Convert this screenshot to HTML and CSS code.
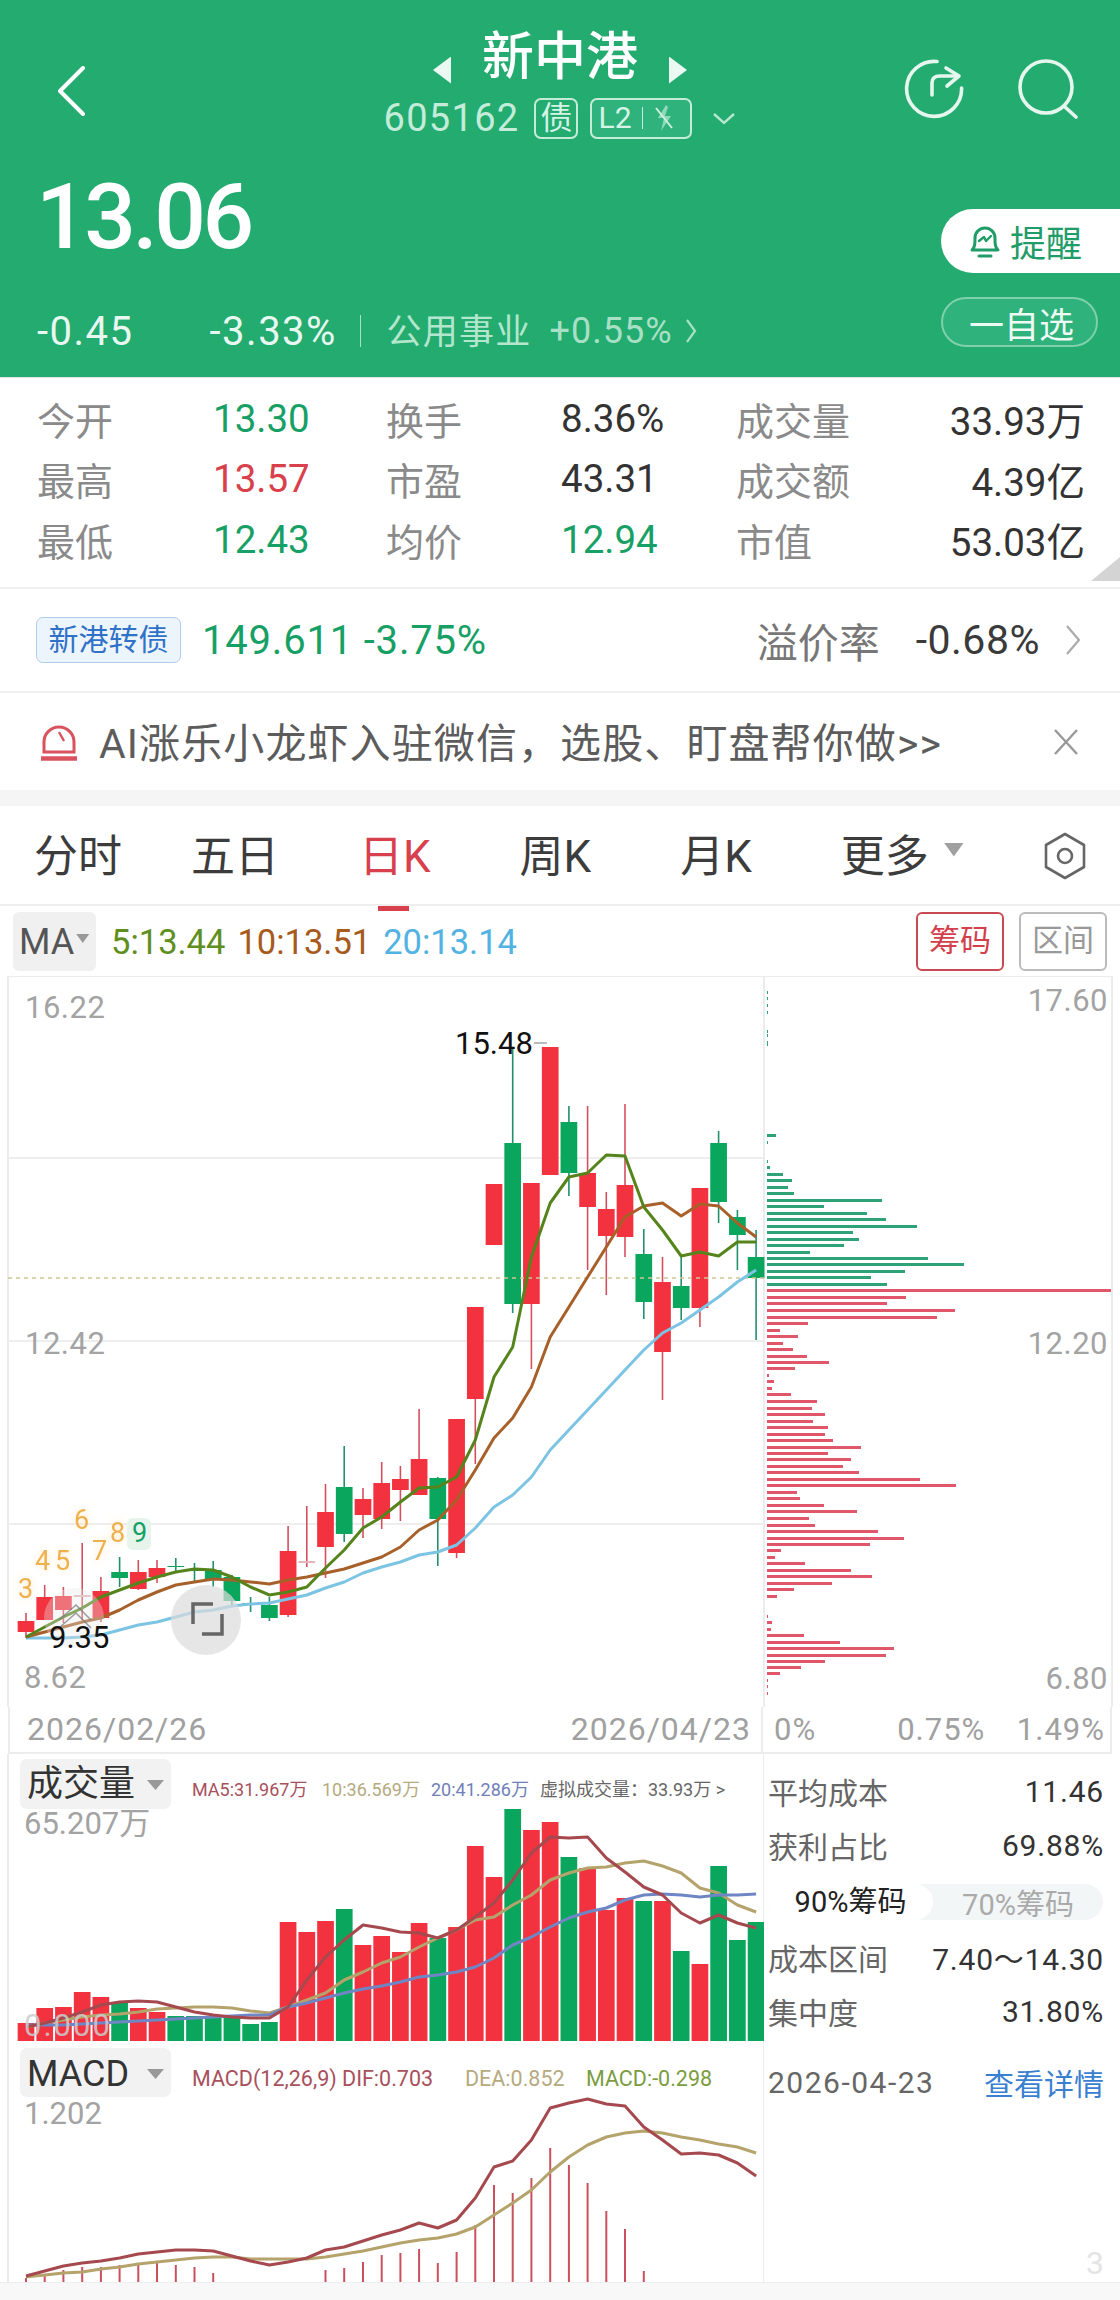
FILE: index.html
```html
<!DOCTYPE html>
<html lang="zh-CN">
<head>
    <meta charset="UTF-8">
    <meta name="viewport" content="width=device-width, initial-scale=1.0">
    <title>新中港 605162</title>
    <link rel="stylesheet" href="styles.css">
</head>
<body>
<div class="page">
    <header class="header">
        <div class="nav">
            <svg class="nav-back" width="28" height="50" viewBox="0 0 28 50"><path d="M26 2 3 25l23 23" fill="none" stroke="#fff" stroke-width="4" stroke-linecap="round" stroke-linejoin="round"/></svg>
            <div class="nav-center">
                <div class="nav-title">
                    <span class="tri-left"></span>
                    <span>新中港</span>
                    <span class="tri-right"></span>
                </div>
                <div class="nav-code">
                    <span class="code">605162</span>
                    <span class="code-badge">债</span>
                    <span class="code-badge level">
                        <span>L2</span>
                        <i class="level-sep"></i>
                        <svg width="22" height="30" viewBox="0 0 22 30"><path d="M13 2 5 15h6l-3 13 10-15h-6l3-9" fill="#8fd8b8"/><path d="M3 5l16 20" stroke="#cfeee0" stroke-width="2"/></svg>
                    </span>
                    <svg class="code-more" width="24" height="13" viewBox="0 0 24 13"><path d="M2 2l10 9 10-9" fill="none" stroke="#b8e6d0" stroke-width="2.4"/></svg>
                </div>
            </div>
            <div class="nav-icons">
                <svg width="60" height="60" viewBox="0 0 60 60" fill="none" stroke="#e4f6ee" stroke-width="3.6" stroke-linecap="round" stroke-linejoin="round">
                    <path d="M33 2.5A27.5 27.5 0 1 0 57.6 29"/>
                    <path d="M28 36V24q0-7 8-7h17"/>
                    <path d="M42 9l13 8-12 10"/>
                </svg>
                <svg width="60" height="60" viewBox="0 0 60 60" fill="none" stroke="#e4f6ee" stroke-width="3.6" stroke-linecap="round">
                    <circle cx="28" cy="28" r="26"/>
                    <path d="M47 48l11 10"/>
                </svg>
            </div>
        </div>
        <div class="quote">
            <div class="quote-left">
                <div class="price">13.06</div>
                <div class="change">
                    <span class="change-abs">-0.45</span>
                    <span class="change-pct">-3.33%</span>
                    <i class="change-sep"></i>
                    <span class="sector">公用事业</span>
                    <span class="sector-pct">+0.55%</span>
                    <svg width="12" height="26" viewBox="0 0 12 26"><path d="M2 2l8 11-8 11" fill="none" stroke="#a8e0c6" stroke-width="2.2"/></svg>
                </div>
            </div>
            <div class="quote-right">
                <div class="remind">
                    <svg width="34" height="36" viewBox="0 0 34 36" fill="none" stroke="#1f9c68" stroke-width="3" stroke-linejoin="round" stroke-linecap="round">
                        <path d="M4 27c3-3 3-6 3-12a10 10 0 0 1 20 0c0 6 0 9 3 12z"/>
                        <path d="M11 33h12"/>
                        <path d="M11 18l5-4 2 4 5-5" stroke-width="2.4"/>
                    </svg>
                    <span>提醒</span>
                </div>
                <div class="watch"><span class="watch-dash">一</span>自选</div>
            </div>
        </div>
    </header>

    <section class="stats">
        <span class="stat-label">今开</span><span class="num down">13.30</span>
        <span class="stat-label">换手</span><span class="num">8.36%</span>
        <span class="stat-label">成交量</span><span class="num end">33.93万</span>
        <span class="stat-label">最高</span><span class="num up">13.57</span>
        <span class="stat-label">市盈</span><span class="num">43.31</span>
        <span class="stat-label">成交额</span><span class="num end">4.39亿</span>
        <span class="stat-label">最低</span><span class="num down">12.43</span>
        <span class="stat-label">均价</span><span class="num down">12.94</span>
        <span class="stat-label">市值</span><span class="num end">53.03亿</span>
        <i class="stats-corner"></i>
    </section>

    <section class="bond">
        <span class="bond-tag">新港转债</span>
        <span class="bond-price">149.611 -3.75%</span>
        <span class="bond-label">溢价率</span>
        <span class="bond-rate">-0.68%</span>
        <svg width="17" height="34" viewBox="0 0 17 34"><path d="M2 3l12 14L2 31" fill="none" stroke="#aaa" stroke-width="2.2"/></svg>
    </section>

    <section class="banner">
        <svg width="38" height="40" viewBox="0 0 38 40" fill="none" stroke="#d9535f" stroke-width="3">
            <path d="M4 30V20a15 15 0 0 1 30 0v10z"/>
            <path d="M19 10l5 9" stroke-width="2.4"/>
            <path d="M1 36.500h36" stroke-width="4.500"/>
        </svg>
        <span class="banner-text">AI涨乐小龙虾入驻微信，选股、盯盘帮你做&gt;&gt;</span>
        <svg width="28" height="28" viewBox="0 0 28 28"><path d="M3 2l22 24M25 2 3 26" stroke="#999" stroke-width="2.4"/></svg>
    </section>

    <nav class="tabs">
        <span class="tab">分时</span>
        <span class="tab tab-tight">五日</span>
        <span class="tab active">日K</span>
        <span class="tab">周K</span>
        <span class="tab">月K</span>
        <span class="tab tab-more">更多<i class="tab-caret"></i></span>
        <svg class="tab-gear" width="44" height="48" viewBox="0 0 44 48" fill="none" stroke="#666" stroke-width="2.600">
            <path d="M22 2l19 11v22L22 46 3 35V13z" stroke-linejoin="round"/>
            <circle cx="22" cy="24" r="7"/>
        </svg>
    </nav>

    <section class="ma-bar">
        <span class="ma-chip">MA<i class="caret"></i></span>
        <span class="ma-val ma5">5:13.44</span>
        <span class="ma-val ma10">10:13.51</span>
        <span class="ma-val ma20">20:13.14</span>
        <span class="ma-btn on">筹码</span>
        <span class="ma-btn">区间</span>
    </section>

    <svg class="kline" width="1120" height="731" viewBox="0 976 1120 731">
        <path class="frame" d="M8 1707V976H1112V1707M764 976V1707"/>
        <path class="grid" d="M8 1158H764M8 1341H764M8 1524H764"/>
        <g id="kline-candles"></g>
        <path class="last-line" d="M8 1278H764"/>
        <g id="kline-lines"></g>
        <g id="chip-bars"></g>
        <text class="axis" x="25" y="1018">16.22</text>
        <text class="axis" x="25" y="1354">12.42</text>
        <text class="axis" x="24" y="1688">8.62</text>
        <text class="axis end" x="1108" y="1011">17.60</text>
        <text class="axis end" x="1108" y="1354">12.20</text>
        <text class="axis end" x="1108" y="1689">6.80</text>
        <text class="extreme" x="455" y="1054">15.48</text>
        <path class="extreme-dash" d="M534 1043h13"/>
        <circle class="fold-bg" cx="74" cy="1618" r="30"/>
        <path class="fold-mark" d="M59 1620l17-15 15 15M59 1628l17-15 15 15"/>
        <text class="extreme" x="49" y="1648">9.35</text>
        <text class="td" x="18" y="1598">3</text>
        <text class="td" x="35" y="1570">4</text>
        <text class="td" x="55" y="1570">5</text>
        <text class="td" x="74" y="1529">6</text>
        <text class="td" x="92" y="1560">7</text>
        <text class="td" x="110" y="1542">8</text>
        <rect class="td-chip" x="127" y="1518" width="24" height="32" rx="6"/>
        <text class="td nine" x="132" y="1542">9</text>
        <circle class="zoom-bg" cx="206" cy="1620" r="35"/>
        <path class="zoom-mark" d="M193 1624v-20h20M222 1614v20h-20"/>
    </svg>

    <div class="axis-row">
        <div class="dates">
            <span>2026/02/26</span>
            <span>2026/04/23</span>
        </div>
        <div class="scale">
            <span>0%</span>
            <span class="scale-mid">0.75%</span>
            <span class="scale-end">1.49%</span>
        </div>
    </div>

    <div class="lower">
        <svg class="sub-charts" width="764" height="528" viewBox="0 1754 764 528">
            <path class="frame" d="M8 1754V2282M764 1754V2282"/>
            <g id="volume-bars"></g>
            <g id="volume-lines"></g>
            <rect class="chip" x="20" y="1759" width="151" height="50" rx="7"/>
            <text class="chip-text" x="27" y="1796">成交量</text>
            <path class="chip-caret" d="M147 1780h17l-8.500 10z"/>
            <text class="legend-sm vr" x="192" y="1796">MA5:31.967万</text>
            <text class="legend-sm vt" x="322" y="1796">10:36.569万</text>
            <text class="legend-sm vb" x="431" y="1796">20:41.286万</text>
            <text class="legend-sm vg" x="540" y="1796">虚拟成交量：33.93万 &gt;</text>
            <text class="axis-sm" x="24" y="1834">65.207万</text>
            <text class="axis-zero" x="24" y="2036">0.000</text>
            <rect class="chip" x="20" y="2048" width="151" height="49" rx="7"/>
            <text class="chip-text" x="27" y="2086">MACD</text>
            <path class="chip-caret" d="M147 2069h17l-8.500 10z"/>
            <text class="legend-md vr" x="192" y="2086">MACD(12,26,9) DIF:0.703</text>
            <text class="legend-md vt" x="465" y="2086">DEA:0.852</text>
            <text class="legend-md vo" x="586" y="2086">MACD:-0.298</text>
            <text class="axis-sm" x="24" y="2124">1.202</text>
            <g id="macd-chart"></g>
        </svg>
        <aside class="chips-info">
            <div class="info-row"><span class="info-key">平均成本</span><span class="info-val">11.46</span></div>
            <div class="info-row"><span class="info-key">获利占比</span><span class="info-val">69.88%</span></div>
            <div class="chip-toggle">
                <span class="toggle-on">90%筹码</span>
                <span class="toggle-off">70%筹码</span>
            </div>
            <div class="info-row"><span class="info-key">成本区间</span><span class="info-val">7.40～14.30</span></div>
            <div class="info-row"><span class="info-key">集中度</span><span class="info-val">31.80%</span></div>
            <div class="info-row info-date"><span class="info-day">2026-04-23</span><span class="info-link">查看详情</span></div>
            <div class="watermark">3</div>
        </aside>
    </div>
    <div class="home-bar"></div>
</div>
<script src="chart.js"></script>
</body>
</html>
```

FILE: styles.css
```css
* {
    box-sizing: border-box;
}
body {
    margin: 0;
    font-family: Roboto, 'Noto Sans CJK SC', sans-serif;
    background: #fff;
}
i {
    display: block;
}
.page {
    width: 1120px;
    height: 2300px;
    overflow: hidden;
    display: flex;
    flex-direction: column;
}

/* green header */
.header {
    height: 377px;
    background: #23ab70;
    color: #fff;
    flex: none;
}
.nav {
    height: 150px;
    display: grid;
    grid-template-columns: 1fr auto 1fr;
}
.nav-back {
    margin: 66px 0 0 57px;
}
.nav-center {
    padding-top: 30px;
}
.nav-title {
    height: 56px;
    display: flex;
    justify-content: center;
    align-items: center;
    gap: 31px;
    font-size: 52px;
    font-weight: 500;
    line-height: 56px;
}
.tri-left, .tri-right {
    width: 18px;
    height: 27px;
    margin-top: 24px;
    background: #eafaf2;
}
.tri-left {
    clip-path: polygon(100% 0, 100% 100%, 0 50%);
}
.tri-right {
    clip-path: polygon(0 0, 100% 50%, 0 100%);
}
.nav-code {
    height: 42px;
    margin-top: 11px;
    display: flex;
    align-items: center;
    gap: 12px;
}
.code {
    font-size: 38px;
    letter-spacing: 1.300px;
    color: #c4ecd9;
    margin-right: 3px;
}
.code-badge {
    height: 41px;
    min-width: 44px;
    border: 2px solid #c4ecd9;
    border-radius: 7px;
    font-size: 32px;
    line-height: 36px;
    text-align: center;
    color: #d6f3e6;
}
.code-badge.level {
    width: 102px;
    padding-left: 6px;
    display: flex;
    align-items: center;
    gap: 10px;
    font-size: 30px;
    background: #2fb27b;
}
.level-sep {
    width: 1.500px;
    height: 22px;
    background: #c4ecd9;
}
.code-more {
    margin-left: 8px;
}
.nav-icons {
    display: flex;
    justify-content: flex-end;
    gap: 54px;
    padding: 59px 42px 0 0;
}
.quote {
    display: flex;
    justify-content: space-between;
}
.quote-left {
    padding: 22px 0 0 36px;
}
.price {
    font-size: 91px;
    line-height: 90px;
    font-weight: 500;
    letter-spacing: -3.500px;
}
.change {
    height: 40px;
    margin: 49px 0 0 1px;
    display: flex;
    align-items: center;
    font-size: 40px;
    letter-spacing: 1.500px;
    color: #e8f8f0;
}
.change-pct {
    margin-left: 76px;
}
.change-sep {
    width: 1.500px;
    height: 32px;
    margin: 0 25px 0 23px;
    background: #a8e0c6;
}
.sector {
    margin-bottom: 6px;
    font-size: 35px;
    letter-spacing: 1.300px;
    color: #b2e6cd;
}
.sector-pct {
    margin: 0 12px 0 18px;
    font-size: 36px;
    letter-spacing: 1px;
    color: #a8e0c6;
}
.quote-right {
    padding-top: 59px;
    display: flex;
    flex-direction: column;
    align-items: flex-end;
}
.remind {
    width: 179px;
    height: 64px;
    padding-left: 27px;
    display: flex;
    align-items: center;
    gap: 8px;
    background: #fff;
    border-radius: 32px 0 0 32px;
    color: #1f9c68;
    font-size: 36px;
}
.watch {
    width: 157px;
    height: 50px;
    margin: 24px 22px 0 0;
    padding-left: 26px;
    display: flex;
    align-items: center;
    border: 2px solid #7fd0ab;
    border-radius: 25px;
    background: #2fb27b;
    font-size: 35px;
    color: #eefaf4;
}
.watch-dash {
    margin-right: 0;
}

/* open / high / low table */
.stats {
    position: relative;
    height: 212px;
    padding: 10px 0 0 37px;
    border-top: 1px solid #e4e4e4;
    border-bottom: 2px solid #f0f0f0;
    display: grid;
    grid-template-columns: 176px 173px 175px 175px 175px 174px;
    grid-auto-rows: 60.500px;
    align-items: center;
    flex: none;
}
.stat-label {
    font-size: 38px;
    color: #8a8a8a;
}
.num {
    font-size: 38.500px;
    color: #333;
}
.num.end {
    text-align: right;
}
.up {
    color: #d8404c;
}
.down {
    color: #17a065;
}
.stats-corner {
    position: absolute;
    right: 0;
    bottom: 6px;
    width: 29px;
    height: 24px;
    background: #d4d4d4;
    clip-path: polygon(100% 0, 100% 100%, 0 100%);
}

/* convertible bond row */
.bond {
    height: 104px;
    padding: 0 38px 0 36px;
    display: flex;
    align-items: center;
    border-bottom: 2px solid #f0f0f0;
    flex: none;
}
.bond-tag {
    width: 145px;
    height: 46px;
    border: 1.500px solid #b0cdea;
    border-radius: 7px;
    background: #edf5fc;
    color: #2f72c8;
    font-size: 30px;
    line-height: 43px;
    text-align: center;
}
.bond-price {
    margin-left: 21px;
    font-size: 40px;
    letter-spacing: .8px;
    color: #17a065;
}
.bond-label {
    margin-left: auto;
    font-size: 41px;
    color: #777;
}
.bond-rate {
    margin: 0 25px 0 36px;
    font-size: 41px;
    letter-spacing: .5px;
    color: #3a3a3a;
}

/* news banner */
.banner {
    height: 97px;
    padding: 0 40px;
    display: flex;
    align-items: center;
    flex: none;
}
.banner-text {
    margin: 0 0 4px 21px;
    flex: 1;
    font-size: 41px;
    letter-spacing: 1.100px;
    color: #5c5c5c;
    white-space: nowrap;
}

/* period tabs */
.tabs {
    position: relative;
    height: 116px;
    padding: 11px 0 0 34px;
    border-top: 16px solid #f5f5f5;
    border-bottom: 2px solid #eee;
    display: flex;
    align-items: center;
    gap: 89px;
    flex: none;
    font-size: 44px;
    color: #3c3c3c;
}
.tab {
    position: relative;
    padding-bottom: 16px;
}
.tab-tight {
    margin-left: -20px;
}
.tab.active {
    margin-left: -9px;
    color: #d9404e;
}
.tab.active::after {
    content: "";
    position: absolute;
    left: 19px;
    bottom: -10px;
    width: 31px;
    height: 5px;
    background: #d9404e;
}
.tab-caret {
    position: absolute;
    left: 103px;
    top: 22px;
    width: 20px;
    height: 14px;
    background: #a0a0a0;
    clip-path: polygon(0 0, 100% 0, 50% 100%);
}
.tab-gear {
    position: absolute;
    left: 1043px;
    top: 26px;
}

/* moving average row */
.ma-bar {
    height: 70px;
    padding: 6px 13px 5px;
    display: flex;
    align-items: center;
    gap: 12px;
    flex: none;
}
.ma-chip {
    width: 83px;
    height: 59px;
    margin-right: 3px;
    padding-left: 6px;
    display: flex;
    align-items: center;
    border-radius: 6px;
    background: #f0f0f0;
    font-size: 36px;
    color: #555;
}
.caret {
    width: 13px;
    height: 9px;
    margin: 0 0 6px 2px;
    background: #999;
    clip-path: polygon(0 0, 100% 0, 50% 100%);
}
.ma-val {
    font-size: 34.500px;
}
.ma5 {
    color: #5f8f1f;
}
.ma10 {
    color: #a65a1c;
}
.ma20 {
    color: #52b2e2;
}
.ma-btn {
    width: 88px;
    height: 59px;
    border: 2px solid #bbb;
    border-radius: 6px;
    color: #999;
    font-size: 31px;
    line-height: 54px;
    text-align: center;
}
.ma-btn.on {
    margin-left: auto;
    margin-right: 3px;
    border-color: #c94a55;
    color: #d33f4c;
}

/* charts, all coordinates are page pixels through the viewBox */
.kline, .sub-charts {
    display: block;
    flex: none;
}
.frame {
    fill: none;
    stroke: #ececec;
    stroke-width: 2;
}
.grid {
    stroke: #eee;
    stroke-width: 2;
}
.last-line {
    stroke: #cfc596;
    stroke-width: 1.500;
    stroke-dasharray: 4 4;
}
.wick-up {
    stroke: #d4505f;
    stroke-width: 1.600;
    fill: none;
}
.wick-down {
    stroke: #22906a;
    stroke-width: 1.600;
    fill: none;
}
.body-up {
    fill: #f2333f;
}
.body-down {
    fill: #0aa65e;
}
.doji {
    stroke: #e3b4b8;
    stroke-width: 2;
    fill: none;
}
.line {
    fill: none;
    stroke-width: 3;
    stroke-linejoin: round;
}
.l-ma5 {
    stroke: #56841c;
}
.l-ma10 {
    stroke: #a8602a;
}
.l-ma20 {
    stroke: #7cc4e4;
}
.l-vr {
    stroke: #a6494f;
    stroke-width: 3;
}
.l-vt {
    stroke: #b5a36c;
    stroke-width: 3;
}
.l-vb {
    stroke: #6f86c4;
    stroke-width: 3;
}
.macd-bar {
    stroke: #c9505c;
    stroke-width: 2;
    fill: none;
}
.chip-green {
    fill: #2fa378;
}
.chip-red {
    fill: #e0566a;
}
.axis {
    font-size: 31px;
    fill: #a3a3a3;
    letter-spacing: .5px;
}
.axis.end {
    text-anchor: end;
}
.extreme {
    font-size: 31px;
    fill: #111;
}
.extreme-dash {
    stroke: #bbb;
    stroke-width: 2;
}
.td {
    font-size: 27px;
    fill: #efb04e;
    filter: drop-shadow(0 0 4px #fde6bd);
}
.td.nine {
    fill: #17a065;
    filter: none;
}
.td-chip {
    fill: #e6f4ec;
}
.fold-bg {
    fill: #e8e8e8;
    opacity: .35;
}
.fold-mark {
    fill: none;
    stroke: #777;
    stroke-width: 1.600;
    opacity: .7;
}
.zoom-bg {
    fill: #dcdcdc;
    opacity: .7;
}
.zoom-mark {
    fill: none;
    stroke: #666;
    stroke-width: 3.500;
}
.chip {
    fill: #f2f2f2;
}
.chip-text {
    font-size: 36px;
    fill: #333;
}
.chip-caret {
    fill: #999;
}
.legend-sm {
    font-size: 18px;
}
.legend-md {
    font-size: 21.500px;
}
.vr {
    fill: #a8505c;
}
.vt {
    fill: #b5aa80;
}
.vb {
    fill: #6f80b8;
}
.vg {
    fill: #666;
}
.vo {
    fill: #7b9c40;
}
.axis-sm {
    font-size: 31px;
    fill: #a3a3a3;
}
.axis-zero {
    font-size: 31px;
    fill: rgba(205, 205, 205, .85);
    letter-spacing: 2px;
}

/* row under the candles */
.axis-row {
    height: 47px;
    display: flex;
    flex: none;
    border-bottom: 2px solid #ececec;
    margin: 0 8px;
    color: #a0a0a0;
    font-size: 32px;
    line-height: 45px;
    letter-spacing: 1px;
}
.dates {
    width: 755px;
    padding: 0 10px 0 17px;
    display: flex;
    justify-content: space-between;
    border-left: 2px solid #ececec;
    border-right: 2px solid #ececec;
}
.scale {
    flex: 1;
    padding: 0 5px 0 11px;
    display: flex;
    border-right: 2px solid #ececec;
    font-size: 31px;
}
.scale-mid {
    margin-left: 81px;
}
.scale-end {
    margin-left: auto;
}

/* chip stats on the right */
.lower {
    height: 528px;
    display: flex;
    flex: none;
}
.chips-info {
    flex: 1;
    padding: 10px 16px 0 4px;
    display: flex;
    flex-direction: column;
    font-size: 30px;
}
.info-row {
    height: 54px;
    display: flex;
    justify-content: space-between;
    align-items: center;
}
.info-key {
    color: #666;
    letter-spacing: 0;
}
.info-val {
    color: #333;
    letter-spacing: .8px;
}
.chip-toggle {
    height: 36px;
    margin: 12px 1px 10px 0;
    display: flex;
    align-items: center;
    border-radius: 18px;
    background: #f3f6f7;
    font-size: 29px;
}
.toggle-on {
    width: 165px;
    height: 36px;
    border-radius: 18px;
    background: #fff;
    text-align: center;
    line-height: 36px;
    color: #222;
}
.toggle-off {
    flex: 1;
    text-align: center;
    color: #aaa;
}
.info-date {
    margin-top: 17px;
}
.info-day {
    color: #666;
    letter-spacing: 1.500px;
}
.info-link {
    color: #3a80d0;
}
.watermark {
    margin-top: auto;
    line-height: 38px;
    text-align: right;
    font-size: 32px;
    color: #e4e4e4;
}
.home-bar {
    flex: 1;
    background: #f8f8f8;
    border-top: 1px solid #eee;
}
```

FILE: chart.js
```js
const X = i => 26 + 18.72 * i;
const BODY = 16.7;

// kind, wick top, body top, body bottom, wick bottom
const candles = [
    ['u', 1613, 1621, 1632, 1638], ['u', 1585, 1597, 1620, 1620], ['u', 1587, 1596, 1610, 1623],
    ['p', 1543, 1595, 1597, 1620], ['u', 1577, 1591, 1618, 1622], ['d', 1557, 1572, 1578, 1587],
    ['u', 1560, 1572, 1589, 1590], ['u', 1560, 1568, 1577, 1583], ['d', 1558, 1566, 1567, 1573],
    ['d', 1563, 1570, 1571, 1583], ['d', 1561, 1570, 1580, 1587], ['d', 1575, 1577, 1601, 1607],
    ['d', 1597, 1603, 1604, 1612], ['d', 1597, 1605, 1618, 1621], ['u', 1526, 1551, 1615, 1617],
    ['p', 1506, 1561, 1562, 1567], ['u', 1484, 1512, 1547, 1578], ['d', 1446, 1487, 1534, 1542],
    ['u', 1488, 1499, 1515, 1538], ['u', 1462, 1483, 1519, 1529], ['u', 1466, 1479, 1490, 1521],
    ['u', 1409, 1459, 1495, 1495], ['d', 1477, 1478, 1519, 1566], ['u', 1419, 1419, 1553, 1558],
    ['u', 1307, 1307, 1399, 1464], ['u', 1184, 1184, 1245, 1245], ['d', 1048, 1143, 1304, 1313],
    ['u', 1183, 1183, 1304, 1369], ['u', 1047, 1047, 1175, 1175], ['d', 1106, 1122, 1173, 1196],
    ['u', 1106, 1173, 1207, 1270], ['u', 1192, 1209, 1236, 1295], ['u', 1104, 1185, 1237, 1257],
    ['d', 1229, 1254, 1302, 1319], ['u', 1257, 1282, 1352, 1400], ['d', 1257, 1286, 1308, 1320],
    ['u', 1188, 1188, 1308, 1327], ['d', 1131, 1143, 1202, 1223], ['d', 1210, 1217, 1235, 1270],
    ['d', 1230, 1257, 1278, 1340]
];

const ma5 = [1637, 1627, 1617, 1608, 1597, 1590, 1583, 1577, 1572, 1569, 1570, 1577, 1587, 1595, 1592, 1587, 1568, 1550, 1528, 1517,
    1502, 1488, 1487, 1477, 1440, 1377, 1347, 1257, 1203, 1177, 1173, 1155, 1156, 1207, 1230, 1256, 1252, 1256, 1242, 1242];
const ma10 = [1637, 1632, 1627, 1622, 1618, 1610, 1600, 1592, 1585, 1582, 1579, 1580, 1582, 1584, 1580, 1577, 1573, 1569, 1563, 1557,
    1547, 1530, 1520, 1500, 1470, 1438, 1418, 1387, 1337, 1307, 1277, 1247, 1217, 1206, 1203, 1216, 1204, 1206, 1223, 1237];
const ma20 = [1638, 1638, 1638, 1637, 1635, 1630, 1625, 1622, 1617, 1612, 1610, 1606, 1604, 1603, 1599, 1595, 1588, 1582, 1573, 1567,
    1562, 1555, 1552, 1545, 1528, 1507, 1495, 1477, 1450, 1430, 1410, 1390, 1370, 1350, 1333, 1323, 1310, 1297, 1282, 1270];

// chip bars: y and right end, from the top of the panel down
const chipGreen = [[991, 768], [997, 768], [1004, 768], [1011, 768], [1030, 768], [1034, 768], [1041, 768], [1043, 768],
    [1134, 776], [1141, 768], [1160, 768], [1166, 770], [1173, 783], [1179, 792], [1186, 788], [1192, 794],
    [1199, 882], [1205, 824], [1212, 867], [1218, 886], [1225, 917], [1231, 853], [1238, 859], [1244, 844],
    [1251, 810], [1257, 928], [1263, 964], [1270, 905], [1276, 871], [1283, 887]];
const chipRed = [[1289, 1111], [1296, 906], [1302, 887], [1309, 955], [1316, 937], [1322, 808], [1329, 780], [1335, 798],
    [1342, 783], [1348, 793], [1355, 807], [1361, 829], [1367, 795], [1374, 769], [1380, 774], [1387, 772],
    [1393, 791], [1400, 817], [1407, 812], [1413, 825], [1420, 813], [1426, 828], [1433, 825], [1439, 833],
    [1446, 861], [1452, 828], [1458, 851], [1465, 843], [1471, 859], [1478, 920], [1484, 956], [1491, 797],
    [1497, 800], [1504, 824], [1510, 857], [1517, 809], [1524, 815], [1530, 878], [1537, 904], [1543, 870],
    [1549, 781], [1556, 775], [1562, 805], [1569, 851], [1575, 872], [1582, 832], [1588, 794], [1595, 777],
    [1615, 768], [1621, 772], [1628, 771], [1634, 804], [1641, 840], [1647, 894], [1654, 886], [1660, 825],
    [1666, 801], [1672, 780], [1679, 768], [1685, 768], [1692, 768]];

// volume tops in page y, green days flagged by the list below
const volTop = [2023, 2008, 2007, 1992, 1997, 2003, 2008, 2012, 2016, 2016, 2017, 2017, 2024, 2022, 1922, 1932, 1921, 1909, 1945, 1936,
    1952, 1923, 1938, 1927, 1846, 1877, 1809, 1830, 1822, 1857, 1868, 1910, 1898, 1901, 1901, 1951, 1964, 1866, 1940, 1922];
const volGreen = [5, 8, 9, 10, 11, 12, 13, 17, 22, 26, 29, 33, 35, 37, 38, 39];

const volMa5 = [2027, 2023, 2018, 2012, 2005, 2002, 2001, 2002, 2007, 2012, 2015, 2017, 2018, 2018, 2007, 1980, 1957, 1940, 1925, 1928,
    1932, 1933, 1938, 1930, 1917, 1903, 1880, 1853, 1837, 1838, 1837, 1858, 1872, 1887, 1895, 1913, 1923, 1915, 1923, 1928];
const volMa10 = [2027, 2023, 2020, 2017, 2015, 2014, 2012, 2009, 2008, 2007, 2007, 2008, 2011, 2013, 2007, 2000, 1993, 1980, 1972, 1963,
    1957, 1947, 1938, 1930, 1920, 1917, 1905, 1895, 1880, 1873, 1868, 1867, 1863, 1861, 1866, 1873, 1888, 1893, 1905, 1912];
const volMa20 = [2025, 2025, 2025, 2024, 2023, 2022, 2021, 2020, 2019, 2018, 2017, 2016, 2015, 2015, 2007, 2003, 1998, 1993, 1989, 1986,
    1982, 1977, 1975, 1972, 1967, 1958, 1945, 1937, 1927, 1918, 1912, 1908, 1900, 1895, 1894, 1895, 1897, 1895, 1895, 1894];

const dif = [2276, 2271, 2266, 2263, 2261, 2258, 2254, 2252, 2250, 2250, 2251, 2256, 2261, 2265, 2262, 2258, 2250, 2247, 2241, 2235,
    2230, 2223, 2228, 2220, 2198, 2167, 2161, 2140, 2108, 2103, 2099, 2104, 2106, 2127, 2140, 2154, 2153, 2155, 2163, 2176];
const dea = [2277, 2275, 2273, 2272, 2269, 2267, 2264, 2262, 2260, 2258, 2257, 2257, 2259, 2259, 2259, 2259, 2257, 2254, 2251, 2247,
    2243, 2240, 2238, 2234, 2227, 2215, 2203, 2190, 2172, 2157, 2145, 2137, 2133, 2131, 2133, 2137, 2140, 2144, 2147, 2153];
const macd = [2278, 2275, 2270, 2267, 2267, 2265, 2264, 2262, 2265, 2267, 2273, 0, 0, 0, 0, 0, 2270, 2268, 2262, 2255,
    2253, 2249, 2263, 2252, 2225, 2185, 2193, 2178, 2148, 2165, 2183, 2211, 2229, 2271, 0, 0, 0, 0, 0, 0];

const polyline = (ys, cls) =>
    `<polyline class="line ${cls}" points="${ys.map((y, i) => `${X(i).toFixed(1)},${y}`).join(' ')}"/>`;

function drawCandles() {
    let out = '';
    candles.forEach(([kind, wickTop, top, bottom, wickBottom], i) => {
        const x = X(i).toFixed(1);
        const up = kind !== 'd';
        const wick = up ? 'wick-up' : 'wick-down';
        out += `<path class="${wick}" d="M${x} ${wickTop}V${wickBottom}"/>`;
        if (kind === 'p') {
            out += `<path class="doji" d="M${x - BODY / 2} ${top + 1}h${BODY}"/>`;
        } else {
            out += `<rect class="${up ? 'body-up' : 'body-down'}" x="${x - BODY / 2}" y="${top}" width="${BODY}" height="${bottom - top}"/>`;
        }
    });
    document.getElementById('kline-candles').innerHTML = out;
    document.getElementById('kline-lines').innerHTML =
        polyline(ma20, 'l-ma20') + polyline(ma10, 'l-ma10') + polyline(ma5, 'l-ma5');
}

function drawChips() {
    const bar = cls => ([y, end]) =>
        `<rect class="${cls}" x="767" y="${y}" width="${end - 767}" height="3"/>`;
    document.getElementById('chip-bars').innerHTML =
        chipGreen.map(bar('chip-green')).join('') + chipRed.map(bar('chip-red')).join('');
}

function drawVolume() {
    document.getElementById('volume-bars').innerHTML = volTop.map((top, i) => {
        const cls = volGreen.includes(i) ? 'body-down' : 'body-up';
        return `<rect class="${cls}" x="${X(i) - BODY / 2}" y="${top}" width="${BODY}" height="${2041 - top}"/>`;
    }).join('');
    document.getElementById('volume-lines').innerHTML =
        polyline(volMa10, 'l-vt') + polyline(volMa20, 'l-vb') + polyline(volMa5, 'l-vr');
}

function drawMacd() {
    const bars = macd.map((top, i) => top ? `<path class="macd-bar" d="M${X(i).toFixed(1)} ${top}V2282"/>` : '').join('');
    document.getElementById('macd-chart').innerHTML =
        bars + polyline(dea, 'l-vt') + polyline(dif, 'l-vr');
}

drawCandles();
drawChips();
drawVolume();
drawMacd();
```
